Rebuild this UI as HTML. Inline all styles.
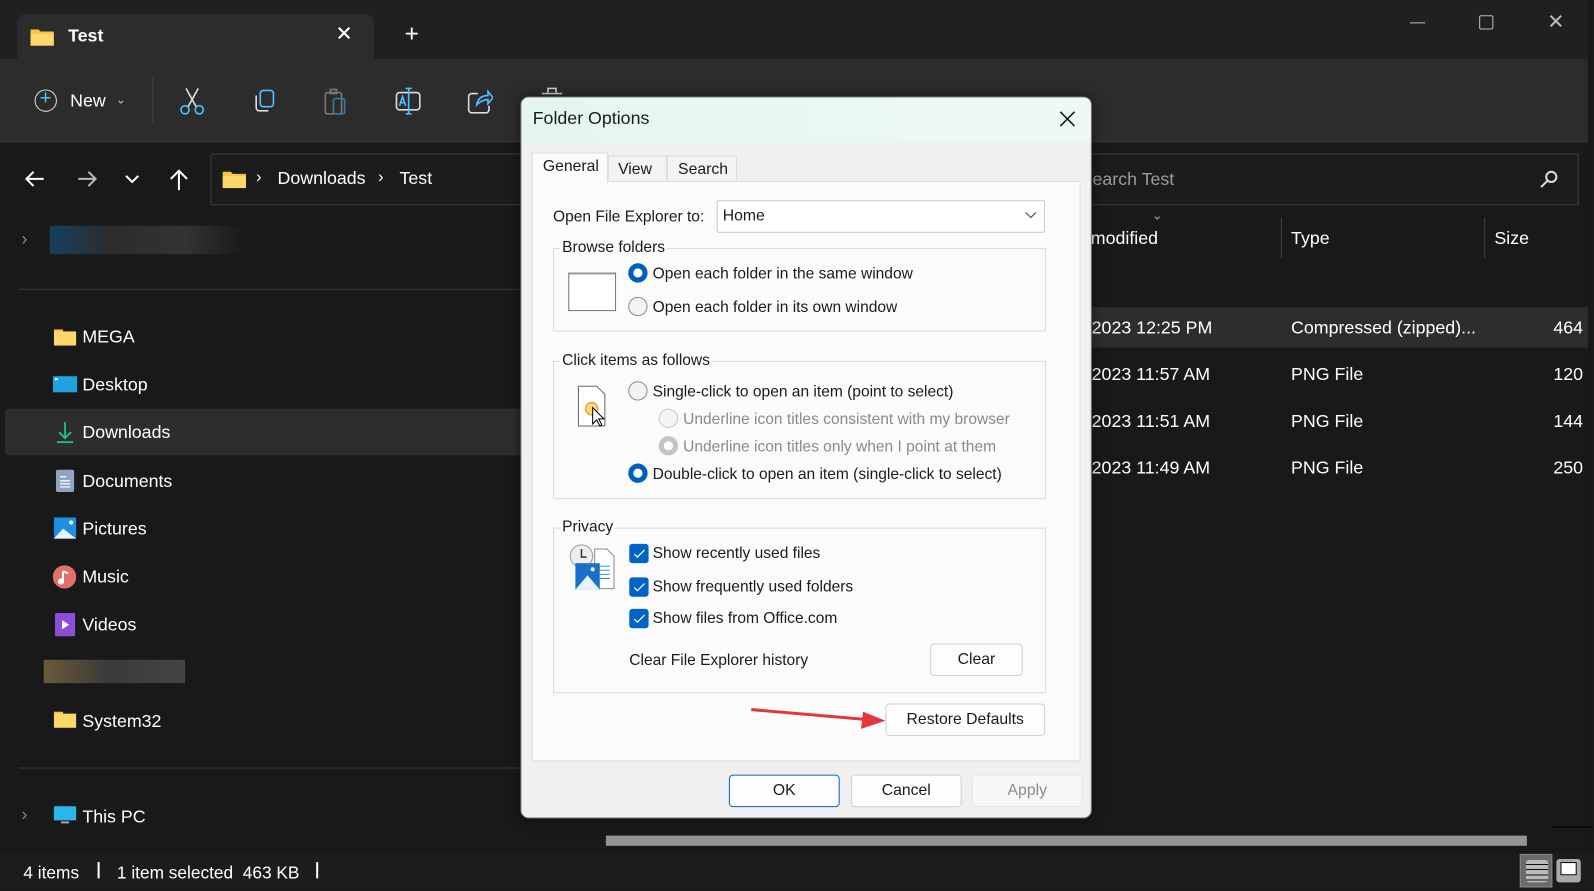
<!DOCTYPE html>
<html><head><meta charset="utf-8"><style>
*{box-sizing:border-box;margin:0;padding:0}
html,body{width:1594px;height:891px;overflow:hidden;background:#191919}
#w{position:absolute;left:0;top:0;width:1568px;height:876px;transform:scale(1.01658);transform-origin:0 0;font-family:"Liberation Sans",sans-serif;color:#fff;overflow:hidden;background:#191919}
.a{position:absolute}
.t{position:absolute;white-space:nowrap;line-height:1}
.side{font-size:17.5px;color:#fff}
.d{color:#1b1b1b;font-size:15.3px}
.rad{position:absolute;width:19px;height:19px;border-radius:50%;border:1px solid #8a8a8a;background:#f3f3f3}
.rad.on{background:#fff;border:5px solid #0060c0}
.rad.dis{border-color:#c8c8c8;background:#f5f5f5}
.chk{position:absolute;width:19px;height:19px;border-radius:3px;background:#0063c6}
.btn{position:absolute;background:#fdfdfd;border:1px solid #d0d0d0;border-radius:4px;font-size:15.5px;color:#1b1b1b;text-align:center}
.box{position:absolute;border:1px solid #dadada}
.leg{position:absolute;background:#fbfbfb;padding:0 2px;font-size:15.3px;color:#1b1b1b;line-height:1}
</style></head><body><div id="w">
<!-- title bar -->
<div class="a" style="left:0;top:0;width:1568px;height:58px;background:#202020"></div>
<div class="a" style="left:17px;top:14px;width:351px;height:46px;background:#2c2c2c;border-radius:8px 8px 0 0"></div>
<svg class="a" style="left:30px;top:27px" width="23" height="18"><path d="M0 2h8l2 2h13v14H0z" fill="#f4c542"/><path d="M0 6h23v12H0z" fill="#fcd86a"/></svg>
<div class="t" style="left:67px;top:27px;font-size:17.5px;font-weight:bold">Test</div>
<div class="t" style="left:330px;top:24px;font-size:20px">✕</div>
<div class="t" style="left:398px;top:22px;font-size:24px;font-weight:300">+</div>
<div class="a" style="left:1387px;top:22px;width:15px;height:1px;background:#bbb"></div>
<div class="a" style="left:1455px;top:15px;width:14px;height:14px;border:1px solid #bbb;border-radius:2px"></div>
<div class="t" style="left:1522px;top:12px;font-size:20px;color:#bbb">✕</div>
<!-- toolbar -->
<div class="a" style="left:0;top:58px;width:1568px;height:82px;background:#2c2c2c;border-bottom:1px solid #3a3a3a"></div>
<div class="a" style="left:34px;top:88px;width:22px;height:22px;border:1.5px solid #ddd;border-radius:50%"></div>
<div class="t" style="left:39px;top:87px;font-size:20px;color:#4cc2ff">+</div>
<div class="t" style="left:69px;top:91px;font-size:17.5px">New</div>
<div class="t" style="left:114px;top:92px;font-size:12px;color:#ccc">⌄</div>
<div class="a" style="left:150px;top:76px;width:1px;height:46px;background:#444"></div>
<svg class="a" style="left:177px;top:86px" width="24" height="28" fill="none" stroke="#4cc2ff" stroke-width="1.6"><path d="M6 1l10 18M18 1L8 19" stroke="#ddd"/><circle cx="5" cy="22" r="4"/><circle cx="19" cy="22" r="4"/></svg>
<svg class="a" style="left:248px;top:88px" width="24" height="24" fill="none" stroke="#ddd" stroke-width="1.6"><rect x="8" y="1" width="13" height="16" rx="3" stroke="#4cc2ff"/><path d="M4 6v12a3 3 0 0 0 3 3h9"/></svg>
<svg class="a" style="left:319px;top:87px" width="24" height="27" fill="none" stroke="#777" stroke-width="1.6"><rect x="1" y="4" width="16" height="21" rx="2"/><rect x="6" y="1" width="6" height="4"/><rect x="9" y="10" width="11" height="15" rx="2" stroke="#3a7aa0"/></svg>
<svg class="a" style="left:389px;top:86px" width="25" height="27" fill="none" stroke="#ddd" stroke-width="1.6"><rect x="1" y="5" width="23" height="17" rx="3"/><path d="M13 1v25M10 1h6M10 26h6" stroke="#4cc2ff"/><path d="M4 18l3-9 3 9M5 15h4" stroke="#4cc2ff"/></svg>
<svg class="a" style="left:460px;top:86px" width="25" height="26" fill="none" stroke="#ddd" stroke-width="1.6"><path d="M10 6H4a3 3 0 0 0-3 3v13a3 3 0 0 0 3 3h14a3 3 0 0 0 3-3v-4"/><path d="M9 17c1-6 5-9 11-9V4l5 6-5 6v-4c-5 0-8 2-11 5z" stroke="#4cc2ff"/></svg>
<svg class="a" style="left:532px;top:84px" width="22" height="10" fill="none" stroke="#ccc" stroke-width="1.6"><path d="M1 8h20M7 8V3h8v5"/></svg>
<!-- nav -->
<svg class="a" style="left:24px;top:167px" width="20" height="18" fill="none" stroke="#fff" stroke-width="2"><path d="M19 9H2M9 2L2 9l7 7"/></svg>
<svg class="a" style="left:76px;top:167px" width="20" height="18" fill="none" stroke="#bbb" stroke-width="2"><path d="M1 9h17M11 2l7 7-7 7"/></svg>
<svg class="a" style="left:123px;top:172px" width="14" height="9" fill="none" stroke="#fff" stroke-width="2"><path d="M1 1l6 6 6-6"/></svg>
<svg class="a" style="left:166px;top:166px" width="20" height="22" fill="none" stroke="#fff" stroke-width="2"><path d="M10 21V2M2 10l8-8 8 8"/></svg>
<div class="a" style="left:207px;top:151px;width:320px;height:51px;background:#1c1c1c;border:1px solid #3d3d3d"></div>
<svg class="a" style="left:219px;top:167px" width="23" height="18"><path d="M0 2h8l2 2h13v14H0z" fill="#f4c542"/><path d="M0 6h23v12H0z" fill="#fcd86a"/></svg>
<div class="t" style="left:252px;top:167px;font-size:16px">›</div>
<div class="t" style="left:273px;top:167px;font-size:17.5px">Downloads</div>
<div class="t" style="left:372px;top:167px;font-size:16px">›</div>
<div class="t" style="left:393px;top:167px;font-size:17.5px">Test</div>
<div class="a" style="left:1040px;top:151px;width:513px;height:51px;background:#1c1c1c;border:1px solid #3d3d3d"></div>
<div class="t" style="left:1063px;top:168px;font-size:17.5px;color:#9a9a9a">Search Test</div>
<svg class="a" style="left:1514px;top:167px" width="20" height="20" fill="none" stroke="#ddd" stroke-width="2"><circle cx="12" cy="7" r="5"/><path d="M8 11l-6 6"/></svg>
<!-- sidebar -->
<div class="t" style="left:21px;top:226px;font-size:18px;color:#888">›</div>
<div class="a" style="left:49px;top:222px;width:191px;height:28px;background:linear-gradient(90deg,#16405f,#2c2c2c 30%,#333 70%,#191919)"></div>
<div class="a" style="left:18px;top:284px;width:520px;height:1px;background:#3a3a3a"></div>
<div class="a" style="left:5px;top:402px;width:530px;height:46px;background:#2d2d2d;border-radius:4px"></div>
<svg class="a" style="left:53px;top:324px" width="22" height="16"><rect y="0" width="9" height="4" fill="#f4c542"/><rect y="2" width="22" height="14" fill="#fcd86a"/></svg>
<svg class="a" style="left:52px;top:370px" width="24" height="16"><rect width="24" height="16" fill="#1ea2e0"/><rect x="2" y="2" width="3" height="2" fill="#fff"/></svg>
<svg class="a" style="left:55px;top:414px" width="18" height="22" fill="none" stroke="#1fbf8f" stroke-width="1.8"><path d="M9 1v16M3 11l6 6 6-6M1 21h16"/></svg>
<svg class="a" style="left:55px;top:462px" width="18" height="22"><rect width="18" height="22" rx="2" fill="#8ea4c0"/><path d="M4 7h6M4 11h10M4 14h10M4 17h10" stroke="#fff" stroke-width="1.2"/></svg>
<svg class="a" style="left:53px;top:509px" width="22" height="21"><rect width="22" height="21" fill="#1d8fe0"/><path d="M0 21L9 11l13 10z" fill="#e8f4ff"/><circle cx="17" cy="5" r="2" fill="#fff"/></svg>
<svg class="a" style="left:52px;top:556px" width="23" height="23"><circle cx="11.5" cy="11.5" r="11.5" fill="#e0706a"/><path d="M10 6v9" stroke="#fff" stroke-width="2"/><circle cx="8" cy="16" r="3" fill="#fff"/><path d="M10 6l5 2" stroke="#fff" stroke-width="2"/></svg>
<svg class="a" style="left:54px;top:603px" width="20" height="23"><rect width="20" height="23" rx="2" fill="#8a4fd8"/><path d="M7 7l7 4.5L7 16z" fill="#fff"/></svg>
<div class="a" style="left:43px;top:649px;width:139px;height:23px;background:linear-gradient(90deg,#6a5a38,#3a3a3a 45%,#444)"></div>
<svg class="a" style="left:53px;top:700px" width="22" height="16"><rect width="9" height="4" fill="#f4c542"/><rect y="2" width="22" height="14" fill="#fcd86a"/></svg>
<div class="a" style="left:18px;top:755px;width:520px;height:1px;background:#3a3a3a"></div>
<div class="t" style="left:21px;top:792px;font-size:18px;color:#888">›</div>
<svg class="a" style="left:53px;top:793px" width="22" height="18"><rect width="22" height="14" fill="#29b6e8"/><rect x="7" y="15" width="8" height="2" fill="#aaa"/></svg>
<div class="t side" style="left:81px;top:323px">MEGA</div>
<div class="t side" style="left:81px;top:370px">Desktop</div>
<div class="t side" style="left:81px;top:417px">Downloads</div>
<div class="t side" style="left:81px;top:465px">Documents</div>
<div class="t side" style="left:81px;top:512px">Pictures</div>
<div class="t side" style="left:81px;top:559px">Music</div>
<div class="t side" style="left:81px;top:606px">Videos</div>
<div class="t side" style="left:81px;top:701px">System32</div>
<div class="t side" style="left:81px;top:795px">This PC</div>
<!-- file list -->
<div class="t" style="left:1133px;top:205px;font-size:13px;color:#aaa">⌄</div>
<div class="t" style="left:1073px;top:226px;font-size:17.5px">modified</div>
<div class="a" style="left:1260px;top:214px;width:1px;height:40px;background:#444"></div>
<div class="a" style="left:1460px;top:214px;width:1px;height:40px;background:#444"></div>
<div class="t" style="left:1270px;top:226px;font-size:17.5px">Type</div>
<div class="t" style="left:1470px;top:226px;font-size:17.5px">Size</div>
<div class="a" style="left:560px;top:302px;width:1008px;height:40px;background:#2d2d2d"></div>
<div class="t" style="left:1069px;top:314px;font-size:17.5px">/2023 12:25 PM</div>
<div class="t" style="left:1069px;top:360px;font-size:17.5px">/2023 11:57 AM</div>
<div class="t" style="left:1069px;top:406px;font-size:17.5px">/2023 11:51 AM</div>
<div class="t" style="left:1069px;top:452px;font-size:17.5px">/2023 11:49 AM</div>
<div class="t" style="left:1270px;top:314px;font-size:17.5px">Compressed (zipped)...</div>
<div class="t" style="left:1270px;top:360px;font-size:17.5px">PNG File</div>
<div class="t" style="left:1270px;top:406px;font-size:17.5px">PNG File</div>
<div class="t" style="left:1270px;top:452px;font-size:17.5px">PNG File</div>
<div class="t" style="left:1528px;top:314px;font-size:17.5px">464 KB</div>
<div class="t" style="left:1528px;top:360px;font-size:17.5px">120 KB</div>
<div class="t" style="left:1528px;top:406px;font-size:17.5px">144 KB</div>
<div class="t" style="left:1528px;top:452px;font-size:17.5px">250 KB</div>
<div class="a" style="left:1562px;top:0;width:6px;height:876px;background:#191919"></div>
<div class="a" style="left:596px;top:822px;width:906px;height:10px;background:#959595"></div>
<div class="a" style="left:1527px;top:813px;width:40px;height:1px;background:#000"></div>
<!-- status -->
<div class="a" style="left:0;top:840px;width:1568px;height:36px;background:#1c1c1c"></div>
<div class="t" style="left:23px;top:850px;font-size:17px">4 items</div>
<div class="a" style="left:96px;top:848px;width:2px;height:16px;background:#fff"></div>
<div class="t" style="left:115px;top:850px;font-size:17px">1 item selected&nbsp;&nbsp;463 KB</div>
<div class="a" style="left:311px;top:848px;width:2px;height:16px;background:#fff"></div>
<div class="a" style="left:1495px;top:840px;width:32px;height:33px;background:#6a6a6a;border:1px solid #888"></div>
<div class="a" style="left:1501px;top:846px;width:22px;height:22px;background:#bbb;border-radius:3px;background-image:repeating-linear-gradient(#bbb 0 4px,#111 4px 5px)"></div>
<div class="a" style="left:1531px;top:845px;width:24px;height:23px;background:#aaa;border-radius:3px"></div>
<div class="a" style="left:1535px;top:848px;width:16px;height:13px;background:#fff;border:1px solid #000"></div>
<!-- dialog -->
<div class="a" style="left:512px;top:95px;width:562px;height:710px;background:#f0f0f0;border:1px solid #888;border-radius:8px;overflow:hidden;box-shadow:0 0 12px rgba(0,0,0,.5)">
 <div class="a" style="left:0;top:0;width:560px;height:44px;background:linear-gradient(90deg,#e4f6f2,#eef9f7)"></div>
 <div class="t" style="left:11px;top:12px;font-size:17.5px;color:#1b1b1b">Folder Options</div>
 <svg class="a" style="left:529px;top:13px" width="16" height="16" stroke="#1b1b1b" stroke-width="1.6"><path d="M1 1l14 14M15 1L1 15"/></svg>
 <div class="a" style="left:10px;top:82px;width:540px;height:571px;background:#fbfbfb;border:1px solid #dcdcdc"></div>
 <div class="a" style="left:10px;top:54px;width:75px;height:30px;background:#fbfbfb;border:1px solid #dcdcdc;border-bottom:none"></div>
 <div class="t d" style="left:21px;top:60px;font-size:15.5px">General</div>
 <div class="a" style="left:85px;top:57px;width:58px;height:25px;background:#f3f3f3;border:1px solid #dcdcdc;border-bottom:none"></div>
 <div class="t d" style="left:95px;top:63px;font-size:15.5px">View</div>
 <div class="a" style="left:143px;top:57px;width:69px;height:25px;background:#f3f3f3;border:1px solid #dcdcdc;border-bottom:none"></div>
 <div class="t d" style="left:154px;top:63px;font-size:15.5px">Search</div>
 <div class="t d" style="left:31px;top:110px">Open File Explorer to:</div>
 <div class="a" style="left:192px;top:101px;width:323px;height:32px;background:#fff;border:1px solid #c8c8c8;border-radius:2px"></div>
 <div class="t d" style="left:198px;top:109px;font-size:15.5px">Home</div>
 <svg class="a" style="left:495px;top:112px" width="12" height="8" fill="none" stroke="#333"><path d="M1 1l5 5 5-5"/></svg>
 <div class="box" style="left:31px;top:148px;width:485px;height:82px"></div>
 <div class="leg" style="left:38px;top:140px">Browse folders</div>
 <div class="a" style="left:46px;top:172px;width:47px;height:38px;border:1px solid #777;background:#fff;border-top:2px solid #999"></div>
 <div class="rad on" style="left:105px;top:163px"></div>
 <div class="t d" style="left:129px;top:166px">Open each folder in the same window</div>
 <div class="rad" style="left:105px;top:196px"></div>
 <div class="t d" style="left:129px;top:199px">Open each folder in its own window</div>
 <div class="box" style="left:31px;top:259px;width:485px;height:136px"></div>
 <div class="leg" style="left:38px;top:251px">Click items as follows</div>
 <svg class="a" style="left:55px;top:283px" width="32" height="44"><path d="M1 1h18l8 8v31H1z" fill="#fff" stroke="#666"/><circle cx="14" cy="23" r="6" fill="#ffd98a" stroke="#f0a030" stroke-width="1.5"/><path d="M15 22v16l4-4 3 6 2-1-3-6h5z" fill="#fff" stroke="#000"/></svg>
 <div class="rad" style="left:105px;top:279px"></div>
 <div class="t d" style="left:129px;top:282px">Single-click to open an item (point to select)</div>
 <div class="rad dis" style="left:135px;top:306px"></div>
 <div class="t d" style="left:159px;top:309px;color:#8a8a8a">Underline icon titles consistent with my browser</div>
 <div class="rad" style="left:135px;top:333px;border:5px solid #c4c4c4;background:#fff"></div>
 <div class="t d" style="left:159px;top:336px;color:#8a8a8a">Underline icon titles only when I point at them</div>
 <div class="rad on" style="left:105px;top:360px"></div>
 <div class="t d" style="left:129px;top:363px">Double-click to open an item (single-click to select)</div>
 <div class="box" style="left:31px;top:423px;width:485px;height:163px"></div>
 <div class="leg" style="left:38px;top:415px">Privacy</div>
 <svg class="a" style="left:47px;top:439px" width="46" height="46"><circle cx="12" cy="12" r="11" fill="#eee" stroke="#999"/><path d="M12 5v8h5" stroke="#333" stroke-width="1.5" fill="none"/><path d="M25 5h12l7 7v32H25z" fill="#fff" stroke="#888"/><path d="M30 22h10M30 26h10M30 30h10M30 34h10" stroke="#3a8fd8"/><rect x="6" y="19" width="24" height="26" fill="#1a70c8"/><path d="M6 45l12-14 12 14z" fill="#e6f2ff"/><circle cx="23" cy="25" r="2" fill="#fff"/></svg>
 <div class="chk" style="left:106px;top:439px"></div><svg class="a" style="left:110px;top:444px" width="12" height="10" fill="none" stroke="#fff" stroke-width="1.2"><path d="M1 5l3 3 7-7"/></svg>
 <div class="t d" style="left:129px;top:441px">Show recently used files</div>
 <div class="chk" style="left:106px;top:472px"></div><svg class="a" style="left:110px;top:477px" width="12" height="10" fill="none" stroke="#fff" stroke-width="1.2"><path d="M1 5l3 3 7-7"/></svg>
 <div class="t d" style="left:129px;top:474px">Show frequently used folders</div>
 <div class="chk" style="left:106px;top:503px"></div><svg class="a" style="left:110px;top:508px" width="12" height="10" fill="none" stroke="#fff" stroke-width="1.2"><path d="M1 5l3 3 7-7"/></svg>
 <div class="t d" style="left:129px;top:505px">Show files from Office.com</div>
 <div class="t d" style="left:106px;top:546px">Clear File Explorer history</div>
 <div class="btn" style="left:402px;top:537px;width:91px;height:32px;line-height:30px">Clear</div>
 <div class="btn" style="left:358px;top:596px;width:157px;height:32px;line-height:30px">Restore Defaults</div>
 <svg class="a" style="left:224px;top:596px" width="140" height="30"><path d="M2 6l116 10" stroke="#e0383c" stroke-width="3"/><path d="M112 8l22 9-24 8z" fill="#e0383c"/></svg>
 <div class="btn" style="left:204px;top:666px;width:109px;height:32px;line-height:30px;border:1.5px solid #0067c0">OK</div>
 <div class="btn" style="left:324px;top:666px;width:109px;height:32px;line-height:30px">Cancel</div>
 <div class="btn" style="left:443px;top:666px;width:109px;height:32px;line-height:30px;color:#8a8a8a;background:#f7f7f7;border-color:#e6e6e6">Apply</div>
</div>
</div></body></html>
